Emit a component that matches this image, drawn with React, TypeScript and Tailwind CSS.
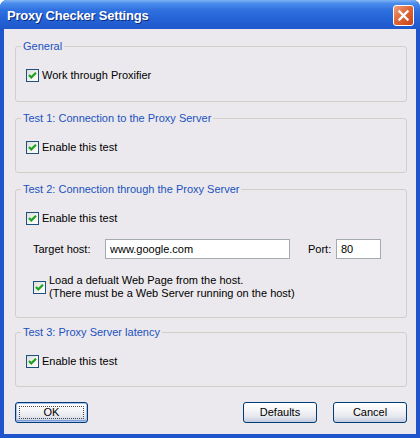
import React from "react";

const font = { fontFamily: '"Liberation Sans", Arial, sans-serif' };

function Check({ className = "" }: { className?: string }) {
  return (
    <span
      className={
        "w-[13px] h-[13px] shrink-0 border border-[#1c5180] bg-[linear-gradient(135deg,#dcdcd7_0%,#f4f4f1_60%,#ffffff_100%)] flex items-center justify-center " +
        className
      }
    >
      <svg width="11" height="11" viewBox="0 0 11 11">
        <path d="M2 5 L4.3 7.4 L9 2.8" fill="none" stroke="#21a121" strokeWidth="2.2" />
      </svg>
    </span>
  );
}

function Group({
  title,
  className = "",
  children,
}: {
  title: string;
  className?: string;
  children?: React.ReactNode;
}) {
  return (
    <div className={"relative border border-[#d0d0c8] rounded-[3px] " + className}>
      <span className="absolute top-[-7px] left-[5px] px-[2px] bg-[#ebe9ed] text-[#2152bd] text-[11px] leading-[13px]">
        {title}
      </span>
      {children}
    </div>
  );
}

function Btn({ label, def = false, className = "" }: { label: string; def?: boolean; className?: string }) {
  return (
    <div
      className={
        "relative h-[21px] border border-[#003c74] rounded-[3px] flex items-center justify-center text-[11px] text-black bg-[linear-gradient(to_bottom,#ffffff_0%,#f6f6f8_35%,#e6e8ee_70%,#c3cbe0_100%)] " +
        (def ? "shadow-[inset_0_0_0_1px_#a9c3ee,inset_0_-1px_0_1px_#7f9fdc] " : "") +
        className
      }
    >
      {def && <span className="absolute inset-[3px] border border-dotted border-[#4a4a4a]" />}
      <span className="relative">{label}</span>
    </div>
  );
}

export default function App() {
  return (
    <div
      className="w-[420px] h-[438px] flex flex-col bg-[#1f54cc] rounded-t-[7px] overflow-hidden"
      style={font}
    >
      <div className="h-[29px] shrink-0 flex items-start pl-[7px] pr-[6px] bg-[linear-gradient(to_bottom,#7db2f4_0%,#4a8cec_12%,#2f70e0_35%,#2463d6_65%,#1f58cc_100%)]">
        <span className="mt-[8px] text-white font-bold text-[13px] tracking-[-0.2px] leading-[16px] [text-shadow:1px_1px_0_#0b2a7c]">
          Proxy Checker Settings
        </span>
        <div className="ml-auto mt-[5px] w-[21px] h-[21px] rounded-[3px] border border-white bg-[linear-gradient(135deg,#f0a080_0%,#e06838_45%,#c84418_100%)] flex items-center justify-center">
          <svg width="13" height="13" viewBox="0 0 13 13">
            <path d="M2.5 2.5 L10.5 10.5 M10.5 2.5 L2.5 10.5" stroke="#ffffff" strokeWidth="2.3" strokeLinecap="square" />
          </svg>
        </div>
      </div>
      <div className="flex-1 mx-[4px] mb-[4px] bg-[#ebe9ed] flex flex-col pl-[11px] pr-[9px] pt-[17px] text-[11px] text-black">
        <Group title="General" className="h-[56px]">
          <div className="flex items-center gap-[3px] pl-[10px] pt-[22px]">
            <Check />
            <span className="leading-[13px]">Work through Proxifier</span>
          </div>
        </Group>
        <Group title="Test 1: Connection to the Proxy Server" className="h-[55px] mt-[16px]">
          <div className="flex items-center gap-[3px] pl-[10px] pt-[22px]">
            <Check />
            <span className="leading-[13px]">Enable this test</span>
          </div>
        </Group>
        <Group title="Test 2: Connection through the Proxy Server" className="h-[129px] mt-[16px]">
          <div className="flex items-center gap-[3px] pl-[10px] pt-[22px]">
            <Check />
            <span className="leading-[13px]">Enable this test</span>
          </div>
          <div className="flex items-center pl-[17px] mt-[14px]">
            <span className="w-[72px]">Target host:</span>
            <div className="w-[185px] h-[20px] border border-[#a5a9b0] bg-white flex items-center pl-[4px]">
              www.google.com
            </div>
            <span className="ml-[18px] w-[28px]">Port:</span>
            <div className="w-[45px] h-[20px] border border-[#a5a9b0] bg-white flex items-center pl-[4px]">
              80
            </div>
          </div>
          <div className="flex items-center gap-[3px] pl-[17px] mt-[15px]">
            <Check />
            <div className="leading-[13px]">
              <div>Load a defualt Web Page from the host.</div>
              <div>(There must be a Web Server running on the host)</div>
            </div>
          </div>
        </Group>
        <Group title="Test 3: Proxy Server latency" className="h-[55px] mt-[14px]">
          <div className="flex items-center gap-[3px] pl-[10px] pt-[22px]">
            <Check />
            <span className="leading-[13px]">Enable this test</span>
          </div>
        </Group>
        <div className="flex mt-[15px]">
          <Btn label="OK" def className="w-[73px]" />
          <Btn label="Defaults" className="w-[74px] ml-auto" />
          <Btn label="Cancel" className="w-[74px] ml-[16px]" />
        </div>
      </div>
    </div>
  );
}
